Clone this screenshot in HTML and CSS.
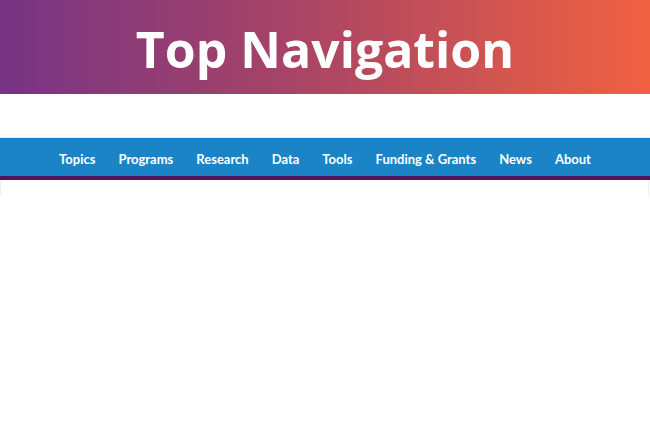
FILE: index.html
```html
<!DOCTYPE html>
<html lang="en">
<head>
<meta charset="utf-8">
<title>Top Navigation</title>
<link rel="stylesheet" href="styles.css">
</head>
<body>
<header class="hero">
  <h1 class="hero-title">Top Navigation</h1>
</header>
<div class="spacer"></div>
<nav class="topnav">
  <ul class="topnav-list">
    <li><a href="#">Topics</a></li>
    <li><a href="#">Programs</a></li>
    <li><a href="#">Research</a></li>
    <li><a href="#">Data</a></li>
    <li><a href="#">Tools</a></li>
    <li><a href="#">Funding &amp; Grants</a></li>
    <li><a href="#">News</a></li>
    <li><a href="#">About</a></li>
  </ul>
</nav>
<div class="below"></div>
</body>
</html>
```
FILE: styles.css
```css
html, body {
  margin: 0;
  padding: 0;
  background: #ffffff;
}
.hero {
  height: 94px;
  box-sizing: border-box;
  padding-top: 3px;
  background: linear-gradient(to right, #763484 0%, #a84466 45%, #f06140 100%);
  display: flex;
  align-items: center;
  justify-content: center;
}
.hero-title {
  margin: 0;
  color: #ffffff;
  font-family: "Open Sans", sans-serif;
  font-weight: 700;
  font-size: 50px;
  line-height: 1;
  letter-spacing: 0;
}
.spacer {
  height: 43px;
}
.topnav {
  border-top: 1px solid #e2e8ee;
  background: #1a84c7;
  border-bottom: 4px solid #4e155a;
}
.topnav-list {
  list-style: none;
  margin: 0;
  padding: 3px 0 0;
  box-sizing: border-box;
  height: 38px;
  display: flex;
  justify-content: center;
  align-items: center;
  gap: 23px;
}
.topnav-list a {
  color: #ffffff;
  text-decoration: none;
  font-family: Lato, sans-serif;
  font-weight: 700;
  font-size: 13px;
}
.below {
  height: 16px;
  border-left: 1px solid #f0f0f2;
  border-right: 1px solid #f0f0f2;
  margin: 0 1px 0 0;
}
```
